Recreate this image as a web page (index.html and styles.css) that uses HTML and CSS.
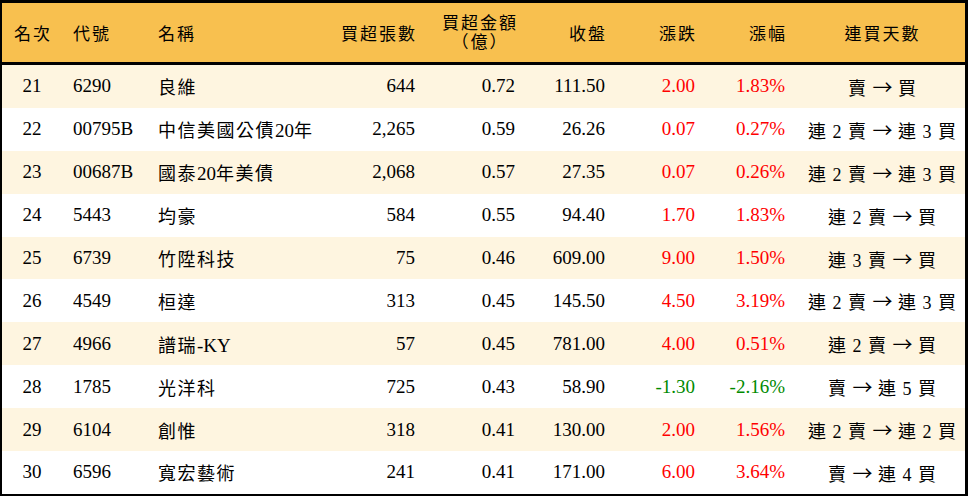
FILE: index.html
```html
<!DOCTYPE html>
<html lang="zh-Hant">
<head>
<meta charset="utf-8">
<link rel="stylesheet" href="styles.css">
</head>
<body>
<table class="rank">
  <colgroup>
    <col class="c-rank"><col class="c-code"><col class="c-name"><col class="c-vol"><col class="c-amt"><col class="c-close"><col class="c-chg"><col class="c-pct"><col class="c-days">
  </colgroup>
  <thead>
    <tr>
      <th class="ctr">名次</th>
      <th class="lft">代號</th>
      <th class="lft name">名稱</th>
      <th class="rgt">買超張數</th>
      <th class="rgt amt"><span class="two">買超金額<br>（億）</span></th>
      <th class="rgt">收盤</th>
      <th class="rgt">漲跌</th>
      <th class="rgt">漲幅</th>
      <th class="ctr">連買天數</th>
    </tr>
  </thead>
  <tbody>
    <tr class="alt"><td class="ctr">21</td><td class="lft">6290</td><td class="lft name">良維</td><td class="rgt">644</td><td class="rgt amt">0.72</td><td class="rgt">111.50</td><td class="rgt up">2.00</td><td class="rgt up">1.83%</td><td class="ctr days">賣 <span class="arr">→</span> 買</td></tr>
    <tr><td class="ctr">22</td><td class="lft">00795B</td><td class="lft name">中信美國公債<span class="num">20</span>年</td><td class="rgt">2,265</td><td class="rgt amt">0.59</td><td class="rgt">26.26</td><td class="rgt up">0.07</td><td class="rgt up">0.27%</td><td class="ctr days">連 2 賣 <span class="arr">→</span> 連 3 買</td></tr>
    <tr class="alt"><td class="ctr">23</td><td class="lft">00687B</td><td class="lft name">國泰<span class="num">20</span>年美債</td><td class="rgt">2,068</td><td class="rgt amt">0.57</td><td class="rgt">27.35</td><td class="rgt up">0.07</td><td class="rgt up">0.26%</td><td class="ctr days">連 2 賣 <span class="arr">→</span> 連 3 買</td></tr>
    <tr><td class="ctr">24</td><td class="lft">5443</td><td class="lft name">均豪</td><td class="rgt">584</td><td class="rgt amt">0.55</td><td class="rgt">94.40</td><td class="rgt up">1.70</td><td class="rgt up">1.83%</td><td class="ctr days">連 2 賣 <span class="arr">→</span> 買</td></tr>
    <tr class="alt"><td class="ctr">25</td><td class="lft">6739</td><td class="lft name">竹陞科技</td><td class="rgt">75</td><td class="rgt amt">0.46</td><td class="rgt">609.00</td><td class="rgt up">9.00</td><td class="rgt up">1.50%</td><td class="ctr days">連 3 賣 <span class="arr">→</span> 買</td></tr>
    <tr><td class="ctr">26</td><td class="lft">4549</td><td class="lft name">桓達</td><td class="rgt">313</td><td class="rgt amt">0.45</td><td class="rgt">145.50</td><td class="rgt up">4.50</td><td class="rgt up">3.19%</td><td class="ctr days">連 2 賣 <span class="arr">→</span> 連 3 買</td></tr>
    <tr class="alt"><td class="ctr">27</td><td class="lft">4966</td><td class="lft name">譜瑞<span class="num">-KY</span></td><td class="rgt">57</td><td class="rgt amt">0.45</td><td class="rgt">781.00</td><td class="rgt up">4.00</td><td class="rgt up">0.51%</td><td class="ctr days">連 2 賣 <span class="arr">→</span> 買</td></tr>
    <tr><td class="ctr">28</td><td class="lft">1785</td><td class="lft name">光洋科</td><td class="rgt">725</td><td class="rgt amt">0.43</td><td class="rgt">58.90</td><td class="rgt down">-1.30</td><td class="rgt down">-2.16%</td><td class="ctr days">賣 <span class="arr">→</span> 連 5 買</td></tr>
    <tr class="alt"><td class="ctr">29</td><td class="lft">6104</td><td class="lft name">創惟</td><td class="rgt">318</td><td class="rgt amt">0.41</td><td class="rgt">130.00</td><td class="rgt up">2.00</td><td class="rgt up">1.56%</td><td class="ctr days">連 2 賣 <span class="arr">→</span> 連 2 買</td></tr>
    <tr><td class="ctr">30</td><td class="lft">6596</td><td class="lft name">寬宏藝術</td><td class="rgt">241</td><td class="rgt amt">0.41</td><td class="rgt">171.00</td><td class="rgt up">6.00</td><td class="rgt up">3.64%</td><td class="ctr days">賣 <span class="arr">→</span> 連 4 買</td></tr>
  </tbody>
</table>
</body>
</html>
```

FILE: styles.css
```css
html, body {
  margin: 0;
  padding: 0;
  background: #ffffff;
}

.rank {
  width: 968px;
  border-collapse: separate;
  border-spacing: 0;
  table-layout: fixed;
  border-top: 3px solid #000;
  border-left: 2px solid #000;
  border-right: 3px solid #000;
  border-bottom: 3px solid #000;
  box-sizing: border-box;
  font-family: "Liberation Serif", "Noto Sans CJK TC", serif;
  font-size: 19px;
  color: #000;
}

.c-rank { width: 60px; }
.c-code { width: 88px; }
.c-name { width: 150px; }
.c-vol { width: 128px; }
.c-amt { width: 102px; }
.c-close { width: 88px; }
.c-chg { width: 90px; }
.c-pct { width: 90px; }
.c-days { width: auto; }

.rank th {
  background: #f8c04f;
  height: 59px;
  padding: 0;
  font-weight: normal;
  font-size: 17px;
  letter-spacing: 2px;
  vertical-align: middle;
  border-bottom: 3px solid #000;
  white-space: nowrap;
}

.rank td {
  height: 42.9px;
  padding: 0;
  vertical-align: middle;
  white-space: nowrap;
  box-sizing: border-box;
}

.rank tr.alt td {
  background: #fef5e0;
}

.ctr { text-align: center; }
.lft { text-align: left; padding-left: 11px !important; }
.lft.name { padding-left: 8px !important; }
.rgt { text-align: right; padding-right: 13px !important; }
.rank th.rgt { padding-right: 11px !important; }
.rank th.ctr { padding-left: 2px !important; }
.rank td.amt { padding-right: 15px !important; }
.rank th.amt { padding-right: 12px !important; }

.rank td.name { letter-spacing: 1.5px; font-size: 18px; }
.rank td.name .num { letter-spacing: 0; font-size: 19px; }

.two {
  display: inline-block;
  text-align: center;
  line-height: 19px;
  padding-top: 2px;
}

.up { color: #ff0000; }
.down { color: #008a00; }

.days { letter-spacing: 1px; font-size: 18px; padding-left: 2px !important; }
.arr {
  font-family: "Noto Sans CJK TC", sans-serif;
  font-size: 20px;
  letter-spacing: 0;
}
```
